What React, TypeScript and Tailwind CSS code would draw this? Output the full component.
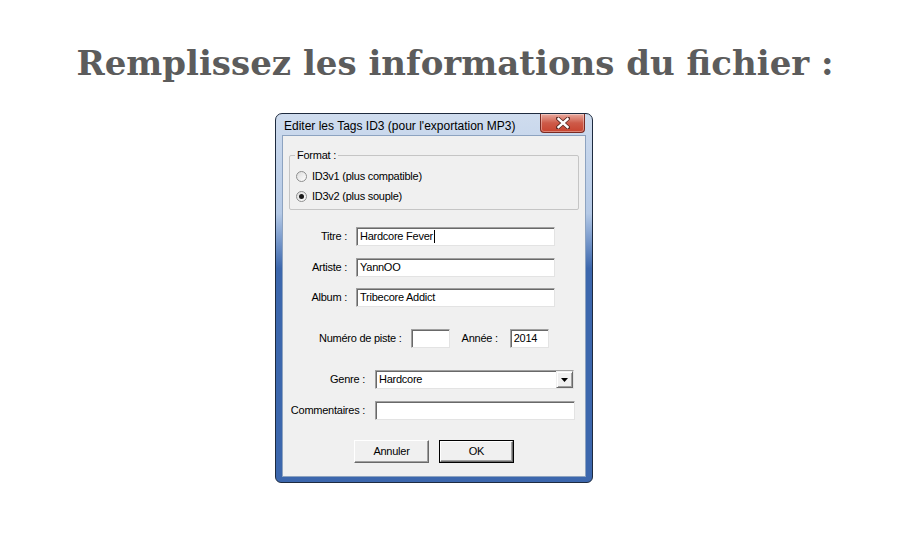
import React from "react";

function TextBox({ w, value, caret }: { w: number; value?: string; caret?: boolean }) {
  return (
    <div
      className="h-[19px] bg-white flex items-center pl-[3px] text-black border-t border-l border-t-[#a0a0a0] border-l-[#a0a0a0] border-r border-b border-r-[#e3e3e3] border-b-[#e3e3e3] shadow-[inset_1px_1px_0_#696969]"
      style={{ width: w }}
    >
      <span className="leading-none">{value}</span>
      {caret && <span className="w-px h-[13px] bg-black ml-px" />}
    </div>
  );
}

function Radio({ checked, label }: { checked?: boolean; label: string }) {
  return (
    <div className="flex items-center h-[20px]">
      <div className="w-[11px] h-[11px] rounded-full border border-[#8e8f8f] bg-gradient-to-br from-[#dcdcdc] to-white flex items-center justify-center ml-[6px]">
        {checked && <div className="w-[5px] h-[5px] rounded-full bg-[#1a1a1a]" />}
      </div>
      <span className="ml-[5px]">{label}</span>
    </div>
  );
}

function Button({ label, def }: { label: string; def?: boolean }) {
  return (
    <div
      className={
        "w-[75px] h-[23px] flex items-center justify-center bg-[#f0f0f0] " +
        (def
          ? "border border-[#000000]"
          : "border border-t-white border-l-white border-r-[#696969] border-b-[#696969]")
      }
    >
      <div
        className={
          "w-full h-full flex items-center justify-center " +
          (def
            ? "border border-t-white border-l-white border-r-[#696969] border-b-[#696969] shadow-[inset_-1px_-1px_0_#a0a0a0]"
            : "shadow-[inset_-1px_-1px_0_#a0a0a0]")
        }
      >
        {label}
      </div>
    </div>
  );
}

export default function App() {
  return (
    <div className="w-[910px] h-[534px] bg-white flex flex-col">
      <h1 className="text-center mt-[37px] h-[52px] text-[34px] leading-[52px] font-bold text-[#5c5c5c] font-['DejaVu_Serif',serif]">
        Remplissez les informations du fichier :
      </h1>
      <div className="ml-[275px] mt-[24px] w-[318px] h-[370px] rounded-t-[7px] rounded-b-[6px] border border-[#1e2b3f] bg-gradient-to-b from-[#cfdcee] via-[#b4c9e6] via-27% to-[#3c67ad] to-42% px-[6px] pb-[5px] flex flex-col font-['Liberation_Sans',Arial,sans-serif] text-[11px] tracking-[-0.25px] text-black">
        <div className="h-[21px] flex items-start relative">
          <span className="mt-[5px] ml-[2px] text-[12px] leading-[14px] text-black tracking-[0px]">
            Editer les Tags ID3 (pour l'exportation MP3)
          </span>
          <div className="ml-auto mr-[1px] w-[45px] h-[19px] rounded-b-[4px] border border-t-0 border-[#7a2a22] bg-gradient-to-b from-[#e8a99e] via-[#cd5a48] to-[#c8432f] flex items-center justify-center shadow-[inset_0_0_0_1px_rgba(255,255,255,0.35)]">
            <svg width="14" height="12" viewBox="0 0 14 12">
              <path d="M2 1.5 L12 10.5 M12 1.5 L2 10.5" stroke="#5a2a24" strokeWidth="4" strokeLinecap="square" />
              <path d="M2.5 2 L11.5 10 M11.5 2 L2.5 10" stroke="#ffffff" strokeWidth="2.4" strokeLinecap="square" />
            </svg>
          </div>
        </div>
        <div className="flex-1 bg-[#f0f0f0] border border-[#8da3c0] flex flex-col">
          <div className="ml-[6px] mt-[19px] w-[290px] h-[55px] border border-[#c5c5c5] rounded-[2px] relative flex flex-col pt-[10px]">
            <span className="absolute -top-[8px] left-[5px] bg-[#f0f0f0] px-[2px] leading-[14px]">Format :</span>
            <Radio label="ID3v1 (plus compatible)" />
            <Radio checked label="ID3v2 (plus souple)" />
          </div>

          <div className="flex items-center mt-[17px]">
            <span className="w-[64px] text-right">Titre :</span>
            <div className="ml-[9px]"><TextBox w={199} value="Hardcore Fever" caret /></div>
          </div>
          <div className="flex items-center mt-[12px]">
            <span className="w-[64px] text-right">Artiste :</span>
            <div className="ml-[9px]"><TextBox w={199} value="YannOO" /></div>
          </div>
          <div className="flex items-center mt-[11px]">
            <span className="w-[64px] text-right">Album :</span>
            <div className="ml-[9px]"><TextBox w={199} value="Tribecore Addict" /></div>
          </div>

          <div className="flex items-center mt-[22px]">
            <span className="ml-[36px]">Numéro de piste :</span>
            <div className="ml-[9px]"><TextBox w={39} /></div>
            <span className="ml-[12px]">Année :</span>
            <div className="ml-[12px]"><TextBox w={39} value="2014" /></div>
          </div>

          <div className="flex items-center mt-[22px]">
            <span className="w-[82px] text-right">Genre :</span>
            <div className="ml-[10px] w-[199px] h-[19px] bg-white flex items-center border-t border-l border-t-[#a0a0a0] border-l-[#a0a0a0] border-r border-b border-r-[#e3e3e3] border-b-[#e3e3e3] shadow-[inset_1px_1px_0_#696969]">
              <span className="pl-[3px] flex-1">Hardcore</span>
              <div className="w-[17px] h-[17px] bg-[#f0f0f0] border border-t-[#f0f0f0] border-l-[#f0f0f0] border-r-[#696969] border-b-[#696969] shadow-[inset_1px_1px_0_#ffffff,inset_-1px_-1px_0_#a0a0a0] flex items-center justify-center">
                <svg width="7" height="4" viewBox="0 0 7 4"><path d="M0 0 H7 L3.5 4 Z" fill="#000" /></svg>
              </div>
            </div>
          </div>

          <div className="flex items-center mt-[12px]">
            <span className="w-[82px] text-right">Commentaires :</span>
            <div className="ml-[10px]"><TextBox w={200} /></div>
          </div>

          <div className="flex mt-[20px] ml-[71px] gap-[10px]">
            <Button label="Annuler" />
            <Button label="OK" def />
          </div>
        </div>
      </div>
    </div>
  );
}
